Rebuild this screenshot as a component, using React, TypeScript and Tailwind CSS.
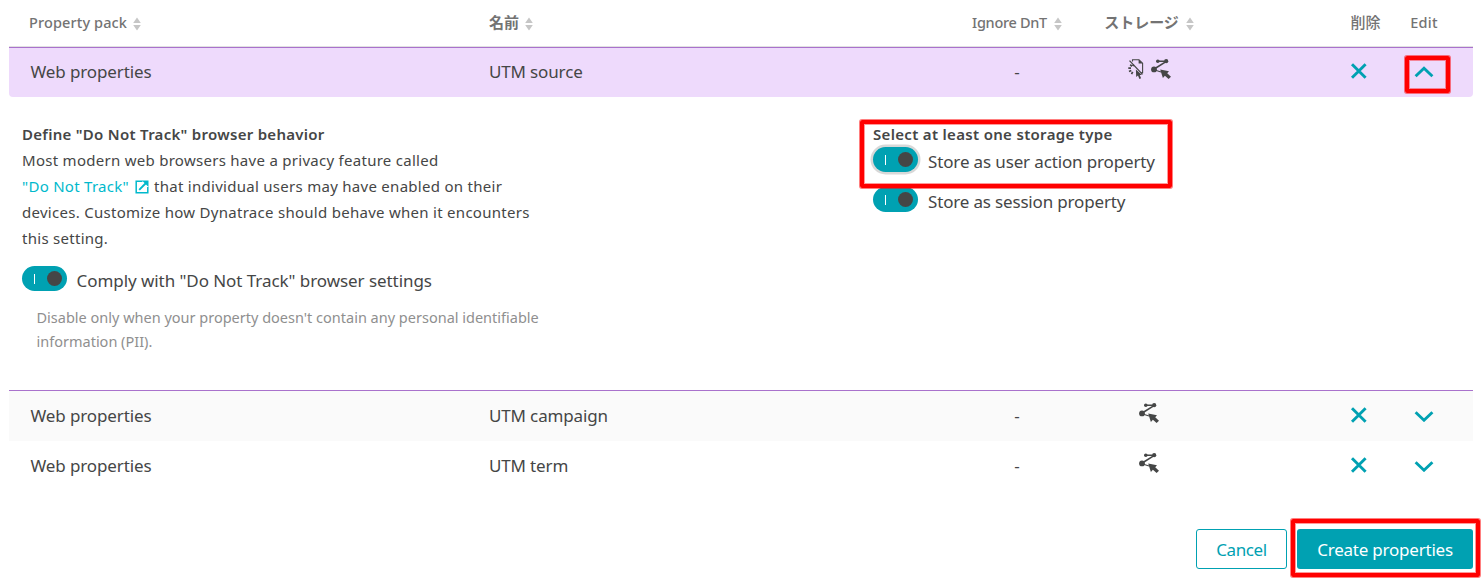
import type { ReactNode } from "react";

const COLS = "grid grid-cols-[458px_500px_100px_164px_77px_100px_32px]";

function Sort() {
  return (
    <svg width="8" height="14" viewBox="0 0 8 14" fill="#c6c6c6" className="shrink-0 translate-y-[2px]">
      <path d="M4 0.5 7.8 6H0.2zM4 13.5 7.8 8H0.2z" />
    </svg>
  );
}

function Cross() {
  return (
    <svg width="17" height="16" viewBox="0 0 17 16" fill="none" stroke="#00a1b2" strokeWidth="2.9">
      <path d="M2 1.2 15.6 14.8M15.6 1.2 2 14.8" />
    </svg>
  );
}

function Chevron({ up = false }: { up?: boolean }) {
  return (
    <svg width="20" height="12" viewBox="0 0 20 12" fill="none" stroke="#00a1b2" strokeWidth="2.9">
      <path d={up ? "M1.6 10.3 10 2.3 18.4 10.3" : "M1.6 2.2 10 10.2 18.4 2.2"} />
    </svg>
  );
}

function SessionIcon() {
  return (
    <svg width="20" height="20" viewBox="0 0 20 20" fill="#454646" stroke="#454646">
      <path d="M2.8 10.2 15 2.6M6.8 2.2H15" fill="none" strokeWidth="1.6" />
      <path d="M3 10.8 10 13" fill="none" strokeWidth="1.1" />
      <circle cx="3" cy="10.4" r="2.9" stroke="none" />
      <circle cx="6.8" cy="2.2" r="1.8" stroke="none" />
      <circle cx="15.2" cy="2.2" r="2.1" stroke="none" />
      <path d="M9.2 10.4 18 12.3 16.2 14.2 20 17.8 17.6 20 13.9 16.7 11.9 18.9z" stroke="none" />
    </svg>
  );
}

function ActionIcon() {
  return (
    <svg width="16" height="20" viewBox="0 0 16 20" fill="none" stroke="#454646">
      <path d="M4.5 2.5V.8H11L14.6 4.2V13.8H12.8" strokeWidth="1.1" />
      <path d="M10.6 .5V4.4H14.8z" fill="#454646" stroke="none" />
      <path d="M1.5 1.6 14.5 15.4" strokeWidth="1.3" />
      <path d="M5.8 5.6 4.9 7M2.2 5.6 4 7.3M.3 9.2H3M1 12.5 3.3 11.4M3.5 15.1 4.7 12.8" strokeWidth="1.7" />
      <path d="M7.9 10.5 8.2 18 10 16.4 11.4 20 13.1 19.2 11.7 15.9H14z" fill="#454646" stroke="none" />
    </svg>
  );
}

function ExternalIcon() {
  return (
    <svg width="14" height="14" viewBox="0 0 14 14" fill="none" stroke="#00b9cc" className="mr-[5px] ml-1.5 inline-block align-[-2px]">
      <path d="M7.5 1.2H1.2V12.8H12.8V7" strokeWidth="1.5" />
      <path d="M4.2 9.8 11 3" strokeWidth="1.9" />
      <path d="M7 .5H13.5V7z" fill="#00b9cc" stroke="none" />
    </svg>
  );
}

function Toggle({ focused = false }: { focused?: boolean }) {
  return (
    <span
      className={
        "flex h-[25px] w-[45px] shrink-0 items-center justify-between rounded-full bg-[#00a1b2] pr-[5px] pl-3 " +
        (focused ? "ring-[2.5px] ring-[#d8d8d8]" : "")
      }
    >
      <span className="h-[10px] w-px bg-white" />
      <span className="size-[15px] rounded-full bg-[#454646]" />
    </span>
  );
}

function Highlight({ className }: { className: string }) {
  return (
    <span
      className={
        "pointer-events-none absolute z-10 rounded-[2px] border-4 border-[#ff0000] shadow-[0_0_0_1px_rgba(255,0,0,0.5),inset_0_0_0_1px_rgba(255,0,0,0.4)] " +
        className
      }
    />
  );
}

function Row({ name, icons, className, open = false }: { name: string; icons: ReactNode; className: string; open?: boolean }) {
  return (
    <div className={`${COLS} items-center text-[17px] leading-6 ${className}`}>
      <span className="pl-[21.5px] tracking-[-0.12px]">Web properties</span>
      <span className="pl-[22px] tracking-[-0.15px]">{name}</span>
      <span className="text-center">-</span>
      <span className="flex -translate-y-[3px] justify-center gap-[7px]">{icons}</span>
      <span />
      <span className="flex -translate-y-px justify-center"><Cross /></span>
      <span className="relative flex justify-center">
        <Chevron up={open} />
        {open && <Highlight className="-top-[10px] -left-[3px] h-[37px] w-[45px]" />}
      </span>
    </div>
  );
}

export default function App() {
  return (
    <main className="h-[581px] w-[1484px] overflow-hidden bg-white pr-[11px] pl-[9px] font-['Noto_Sans','Noto_Sans_CJK_JP',sans-serif] text-[#454646]">
      <div className={`${COLS} h-[47px] items-center border-b border-[#e1e1e1] pb-[2px] text-[14.5px] leading-5 font-medium whitespace-nowrap text-[#737373]`}>
        <span className="flex items-center gap-1.5 pl-5 tracking-[0.12px]">Property pack<Sort /></span>
        <span className="flex items-center gap-1.5 pl-[22px] text-[15px] font-bold">名前<Sort /></span>
        <span className="flex items-center justify-center gap-[7px] tracking-[-0.3px]">Ignore DnT<Sort /></span>
        <span className="flex items-center justify-center gap-[7px] text-[15px] font-bold">ストレージ<Sort /></span>
        <span />
        <span className="pl-[15px] text-center text-[15px]">削除</span>
        <span className="text-center tracking-[0.2px]">Edit</span>
      </div>

      <Row open name="UTM source" icons={<><ActionIcon /><SessionIcon /></>} className="h-[50px] rounded-b border-t border-[#a972cc] bg-[#eedafc] pb-[2px]" />

      <section className="flex h-[293px] pl-[13px]">
        <div className="w-[851px] pt-6">
          <div className="text-[15px] leading-[26px] tracking-[0.28px] whitespace-nowrap">
            <h2 className="font-semibold">Define "Do Not Track" browser behavior</h2>
            <p>
              Most modern web browsers have a privacy feature called<br />
              <a className="text-[#00b9cc]">"Do Not Track"<ExternalIcon /></a>that individual users may have enabled on their<br />
              devices. Customize how Dynatrace should behave when it encounters<br />
              this setting.
            </p>
          </div>
          <div className="mt-[15px] flex gap-[9.5px] text-[17px] leading-[29px] tracking-[-0.06px]">
            <Toggle />
            <span>Comply with "Do Not Track" browser settings</span>
          </div>
          <p className="mt-[10px] pl-[14.5px] text-[14.5px] leading-6 text-[#8f8f8f]">
            Disable only when your property doesn't contain any personal identifiable<br />
            information (PII).
          </p>
        </div>
        <div className="relative pt-6">
          <Highlight className="-left-[13px] top-[23px] h-[68px] w-[312px]" />
          <h2 className="text-[15px] leading-[26px] font-semibold tracking-[0.32px]">Select at least one storage type</h2>
          <div className="flex h-10 gap-2.5 text-[17px] leading-[29px] tracking-[-0.14px]">
            <Toggle focused />
            <span>Store as user action property</span>
          </div>
          <div className="flex h-10 gap-2.5 text-[17px] leading-[29px] tracking-[-0.17px]">
            <Toggle />
            <span>Store as session property</span>
          </div>
        </div>
      </section>

      <Row name="UTM campaign" icons={<SessionIcon />} className="h-[51px] border-t border-[#a972cc] bg-[#fafafa]" />
      <Row name="UTM term" icons={<SessionIcon />} className="h-[50px]" />

      <footer className="mt-[38px] flex justify-end gap-2.5 text-[17px]">
        <button className="h-10 w-[91px] rounded-[3px] border border-[#00a1b2] pt-[2px] tracking-[-0.4px] text-[#00a1b2]">Cancel</button>
        <button className="relative h-10 w-44 rounded-[3px] bg-[#00a1b2] pt-[2px] tracking-[-0.22px] text-white">
          Create properties
          <Highlight className="-top-[10px] -left-[6px] h-[58px] w-[189px]" />
        </button>
      </footer>
    </main>
  );
}
